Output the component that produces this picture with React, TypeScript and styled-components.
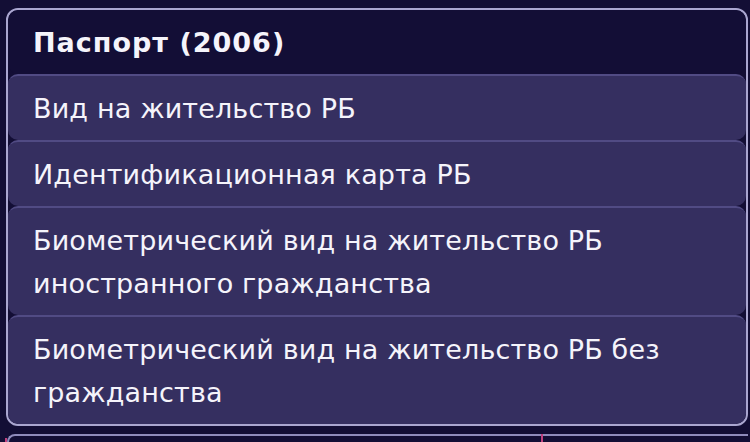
import React from "react";
import styled, { createGlobalStyle } from "styled-components";

const Global = createGlobalStyle`
  html, body { margin: 0; padding: 0; background: #130e35; }
  body { font-family: "DejaVu Sans", Inter, sans-serif; overflow: hidden; }
  * { box-sizing: border-box; }
`;

const Page = styled.div`
  width: 750px;
  height: 442px;
  padding: 8px 2px 0 6px;
  background: #130e35;
  display: flex;
  flex-direction: column;
  overflow: hidden;
`;

const List = styled.ul`
  list-style: none;
  margin: 0;
  padding: 0;
  border: 2px solid #aaa6d0;
  border-radius: 12px;
  background: #130e35;
  overflow: hidden;
  display: flex;
  flex-direction: column;
  flex-shrink: 0;
`;

const Item = styled.li<{ $active?: boolean; $first?: boolean }>`
  padding: 10.5px 25px;
  font-family: "DejaVu Sans", Inter, sans-serif;
  font-size: 27px;
  line-height: 43px;
  color: #f5f4fb;
  font-weight: ${(p) => (p.$active ? 700 : 400)};
  letter-spacing: ${(p) => (p.$active ? "1px" : "0.15px")};
  background: ${(p) => (p.$active ? "#130e36" : "#352f60")};
  border-top: ${(p) => (p.$first ? "0" : "2px solid #514b84")};
  border-radius: 10px;
`;

const Under = styled.div`
  position: relative;
  margin-top: 8px;
  flex: 1;
  border-top: 2px solid #8f8bbb;
  border-left: 2px solid #8f8bbb;
  border-top-left-radius: 10px;
  margin-left: 1px;
  &::before {
    content: "";
    position: absolute;
    left: -4px;
    top: 2px;
    bottom: 0;
    width: 2px;
    background: #c0407e;
  }
  &::after {
    content: "";
    position: absolute;
    left: 532px;
    top: -2px;
    bottom: 0;
    width: 2px;
    background: #c0407e;
  }
`;

const items = [
  "Паспорт (2006)",
  "Вид на жительство РБ",
  "Идентификационная карта РБ",
  "Биометрический вид на жительство РБ иностранного гражданства",
  "Биометрический вид на жительство РБ без гражданства",
];

export default function App() {
  return (
    <Page>
      <Global />
      <List>
        {items.map((t, i) => (
          <Item key={i} $active={i === 0} $first={i === 0}>
            {t}
          </Item>
        ))}
      </List>
      <Under />
    </Page>
  );
}
